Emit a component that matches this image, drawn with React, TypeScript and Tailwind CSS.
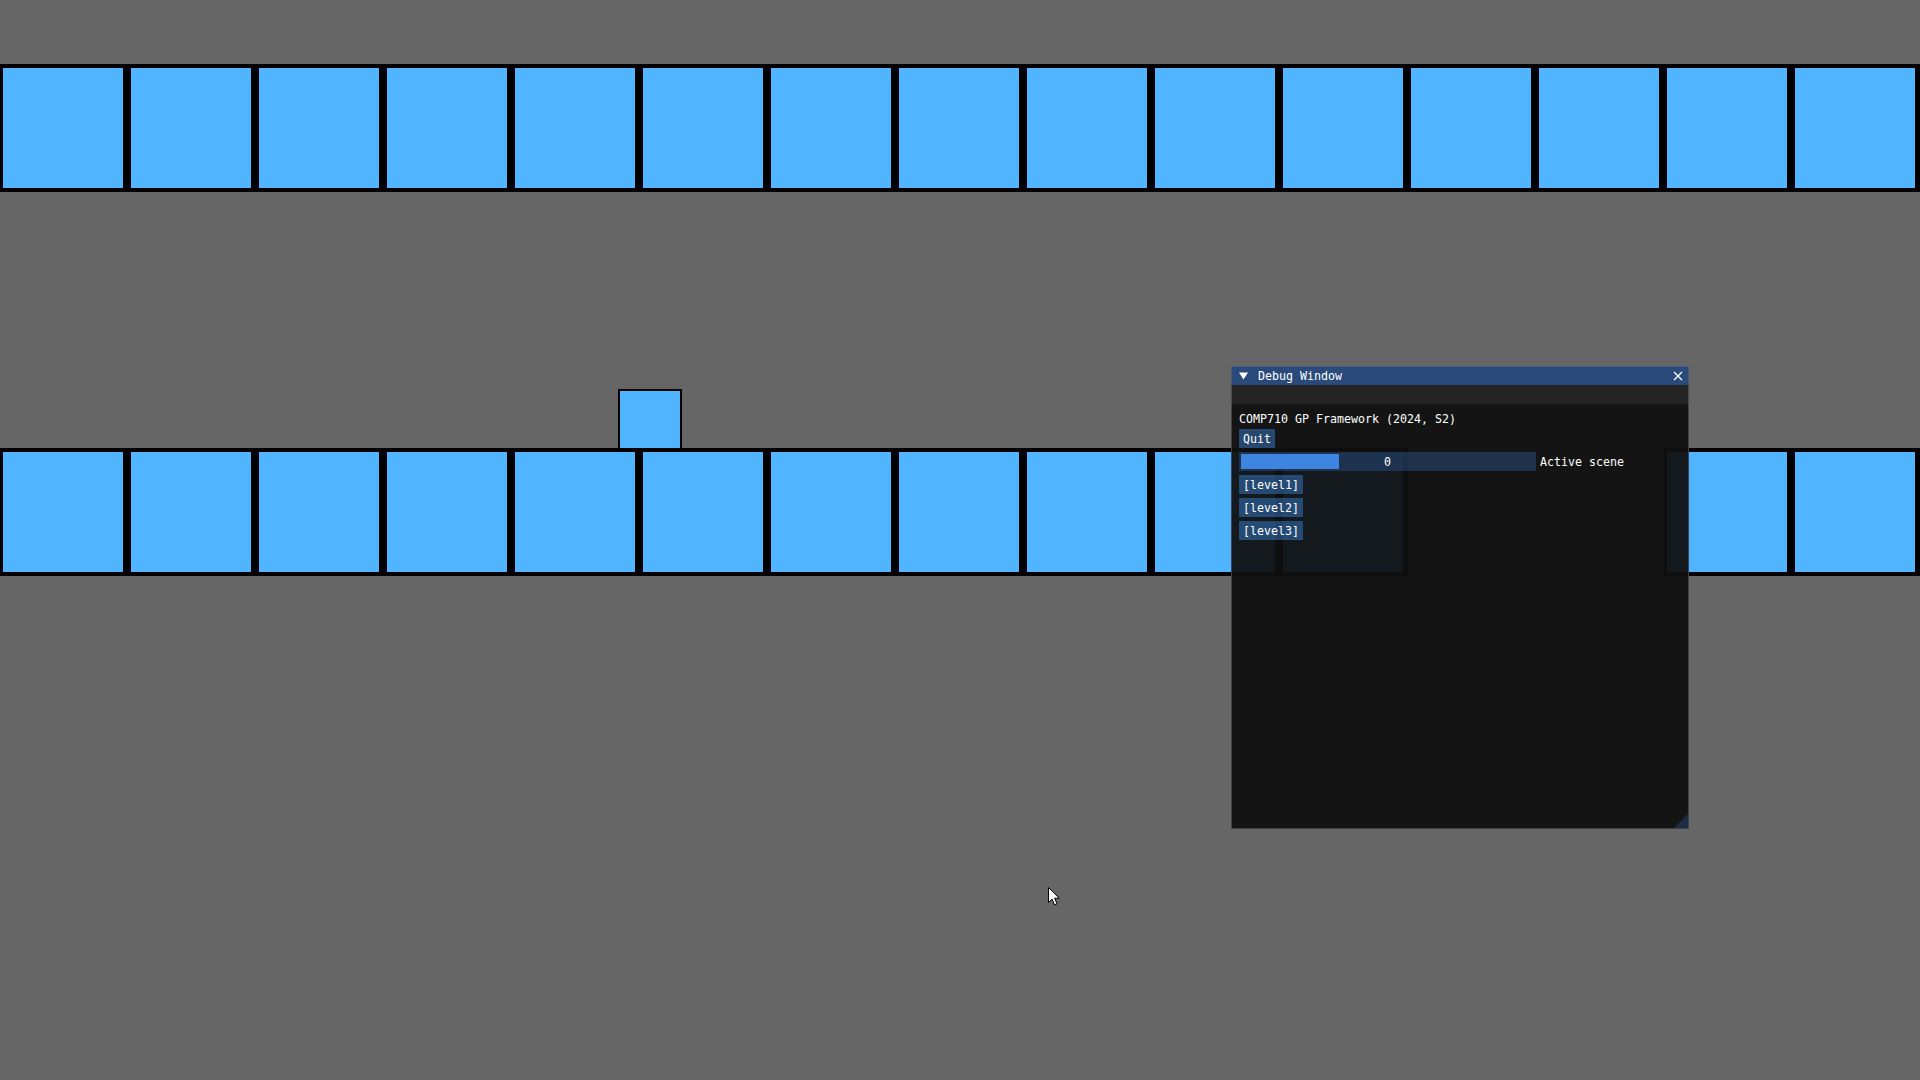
import React from "react";

const Tile = () => (
  <div className="w-[128px] h-[128px] shrink-0 border-y-4 border-l-[3px] border-r-[5px] border-black bg-[#50b4ff]" />
);

const Gap = () => <div className="w-[128px] h-[128px] shrink-0" />;

const ImButton = ({ label }: { label: string }) => (
  <div className="px-[4px] py-[3px] bg-[rgba(66,150,250,0.4)] whitespace-pre">
    <span className="relative top-[1px]">{label}</span>
  </div>
);

export default function App() {
  const top = Array.from({ length: 15 }, (_, i) => i);
  const bottom = Array.from({ length: 15 }, (_, i) => i);
  return (
    <div className="relative w-[1920px] h-[1080px] overflow-hidden bg-[#666666]">
      {/* top row */}
      <div className="flex mt-[64px] h-[128px]">
        {top.map((i) => (
          <Tile key={i} />
        ))}
      </div>
      {/* bottom row */}
      <div className="flex mt-[256px] h-[128px]">
        {bottom.map((i) => (i === 11 || i === 12 ? <Gap key={i} /> : <Tile key={i} />))}
      </div>

      {/* player */}
      <div className="absolute left-[618px] top-[389px] w-[64px] h-[61px] border-2 border-black bg-[#50b4ff]" />

      {/* Debug window */}
      <div className="absolute left-[1231px] top-[366px] w-[458px] h-[463px] flex flex-col bg-[rgba(15,15,15,0.94)] text-white font-['DejaVu_Sans_Mono','Liberation_Mono',monospace] text-[11.63px] leading-[13px]">
        <div className="h-[19px] shrink-0 flex items-center bg-[#294a7a]">
          <svg width="9" height="8" viewBox="0 0 9 8" className="ml-[8px]">
            <polygon points="0,0.5 9,0.5 4.5,7.5" fill="#ffffff" />
          </svg>
          <span className="ml-[10px] whitespace-pre relative top-[1px]">Debug Window</span>
          <svg width="10" height="10" viewBox="0 0 10 10" className="ml-auto mr-[6px]">
            <path d="M1 1 L9 9 M9 1 L1 9" stroke="#ffffff" strokeWidth="1.3" />
          </svg>
        </div>
        <div className="h-[19px] shrink-0 bg-[#242424]" />
        <div className="flex flex-col items-start gap-[4px] p-[8px]">
          <div className="h-[13px] whitespace-pre">
            <span className="relative top-[1px]">COMP710 GP Framework (2024, S2)</span>
          </div>
          <ImButton label="Quit" />
          <div className="flex items-center gap-[4px]">
            <div className="relative w-[297px] h-[19px] flex items-center justify-center bg-[rgba(41,74,122,0.54)]">
              <div className="absolute left-[2px] top-[2px] w-[98px] h-[15px] bg-[#3d85e0]" />
              <span className="relative top-[1px]">0</span>
            </div>
            <span className="whitespace-pre relative top-[1px]">Active scene</span>
          </div>
          <ImButton label="[level1]" />
          <ImButton label="[level2]" />
          <ImButton label="[level3]" />
        </div>
        {/* resize grip */}
        <svg width="14" height="14" viewBox="0 0 14 14" className="absolute right-[1px] bottom-[1px]">
          <polygon points="14,0 14,14 0,14" fill="rgba(66,150,250,0.2)" />
        </svg>
        {/* border */}
        <div className="absolute inset-0 border border-[rgba(110,110,128,0.5)] pointer-events-none" />
      </div>

      {/* mouse cursor */}
      <svg width="14" height="21" viewBox="0 0 14 21" className="absolute left-[1047px] top-[886px]">
        <path
          d="M1.5 1.5 L1.5 16.5 L5 13 L7.5 18.8 L10 17.8 L7.6 12.2 L12.3 12.2 Z"
          fill="#ffffff"
          stroke="#000000"
          strokeWidth="1"
          strokeLinejoin="miter"
        />
      </svg>
    </div>
  );
}
